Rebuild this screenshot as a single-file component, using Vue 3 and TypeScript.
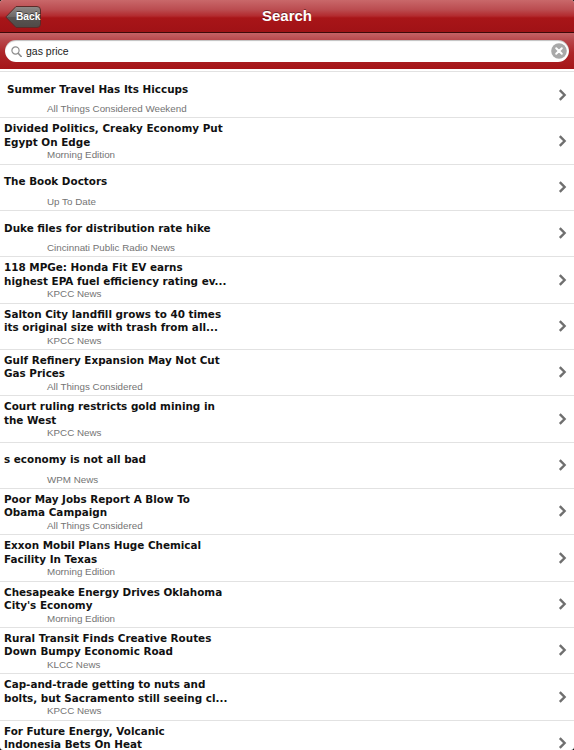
<script setup lang="ts">
interface Story { title: string; source: string; indent?: boolean }
const stories: Story[] = [
  { title: 'Summer Travel Has Its Hiccups', source: 'All Things Considered Weekend', indent: true },
  { title: 'Divided Politics, Creaky Economy Put\nEgypt On Edge', source: 'Morning Edition' },
  { title: 'The Book Doctors', source: 'Up To Date' },
  { title: 'Duke files for distribution rate hike', source: 'Cincinnati Public Radio News' },
  { title: '118 MPGe: Honda Fit EV earns\nhighest EPA fuel efficiency rating ev...', source: 'KPCC News' },
  { title: 'Salton City landfill grows to 40 times\nits original size with trash from all...', source: 'KPCC News' },
  { title: 'Gulf Refinery Expansion May Not Cut\nGas Prices', source: 'All Things Considered' },
  { title: 'Court ruling restricts gold mining in\nthe West', source: 'KPCC News' },
  { title: 's economy is not all bad', source: 'WPM News' },
  { title: 'Poor May Jobs Report A Blow To\nObama Campaign', source: 'All Things Considered' },
  { title: 'Exxon Mobil Plans Huge Chemical\nFacility In Texas', source: 'Morning Edition' },
  { title: "Chesapeake Energy Drives Oklahoma\nCity's Economy", source: 'Morning Edition' },
  { title: 'Rural Transit Finds Creative Routes\nDown Bumpy Economic Road', source: 'KLCC News' },
  { title: 'Cap-and-trade getting to nuts and\nbolts, but Sacramento still seeing cl...', source: 'KPCC News' },
  { title: 'For Future Energy, Volcanic\nIndonesia Bets On Heat', source: 'All Things Considered' },
]
</script>

<template>
  <div class="frame">
    <div class="screen">
      <header class="navbar">
        <button class="back">
          <svg class="back-shape" width="36" height="22" viewBox="0 0 36 22">
            <defs>
              <linearGradient id="backFill" x1="0" y1="0" x2="0" y2="1">
                <stop offset="0" stop-color="#8f8a88" />
                <stop offset="0.5" stop-color="#6d6765" />
                <stop offset="0.5" stop-color="#5a5452" />
                <stop offset="1" stop-color="#4e4947" />
              </linearGradient>
            </defs>
            <path d="M11 .5H32a3.500 3.500 0 0 1 3.500 3.500V18a3.500 3.500 0 0 1-3.500 3.500H11L.8 11Z" fill="url(#backFill)" stroke="#5c2a28" />
          </svg>
          <span class="back-label">Back</span>
        </button>
        <h1 class="title">Search</h1>
      </header>
      <div class="searchbar">
        <div class="field">
          <svg class="glass" width="11" height="11" viewBox="0 0 11 11" fill="none" stroke="#8d8d8d">
            <circle cx="4.500" cy="4.500" r="3.600" stroke-width="1.200" />
            <path d="M7.200 7.300l3 3.200" stroke-width="1.600" stroke-linecap="round" />
          </svg>
          <span class="query">gas price</span>
          <svg class="clear" width="16" height="16" viewBox="0 0 16 16">
            <circle cx="8" cy="8" r="7.800" fill="#a9a9a9" />
            <path d="M5.200 5.200l5.600 5.600M10.800 5.200l-5.600 5.600" stroke="#fff" stroke-width="2" stroke-linecap="round" />
          </svg>
        </div>
      </div>
      <ul class="list">
        <li v-for="story in stories" :key="story.title" class="row">
          <div class="text">
            <div class="head">
              <div class="headline" :class="{ indent: story.indent }">{{ story.title }}</div>
            </div>
            <div class="source">{{ story.source }}</div>
          </div>
          <svg class="chev" width="9" height="12" viewBox="0 0 9 12" fill="none">
            <path d="M1.800 1.200L6.600 6L1.800 10.800" stroke="#6f6f6f" stroke-width="2.400" />
          </svg>
        </li>
      </ul>
    </div>
  </div>
</template>

<style>
html, body { margin: 0; background: #000; overflow: hidden; }
</style>

<style scoped>
.frame {
  width: 574px;
  height: 750px;
  background: #000;
}
.screen {
  width: 574px;
  height: 750px;
  overflow: hidden;
  background: #fff;
  border-radius: 3px;
  font-family: "Liberation Sans", Arial, sans-serif;
}
.navbar {
  position: relative;
  height: 32px;
  display: flex;
  align-items: center;
  justify-content: center;
  background: linear-gradient(#c9686a 0, #bb4c50 30%, #b32a2e 50%, #a81518 56%, #a01216 100%);
  border-bottom: 1px solid #3d0a0a;
}
.back {
  position: absolute;
  left: 5px;
  top: 6px;
  width: 36px;
  height: 22px;
  padding: 0;
  border: 0;
  background: none;
  font-family: inherit;
}
.back-shape { position: absolute; left: 0; top: 0; }
.back-label {
  position: relative;
  display: block;
  padding-left: 11px;
  text-align: left;
  font-size: 10.200px;
  line-height: 22px;
  font-weight: 700;
  color: #fff;
  text-shadow: 0 -1px 0 rgba(0, 0, 0, .5);
}
.title {
  margin: -2px 0 0;
  font-size: 15px;
  font-weight: 700;
  color: #fff;
  text-shadow: 0 -1px 0 rgba(0, 0, 0, .4);
}
.searchbar {
  height: 36px;
  box-sizing: border-box;
  padding: 7px 5px 6px;
  background: linear-gradient(#c46266 0, #b8474b 20%, #ad2528 55%, #a51518 100%);
}
.field {
  height: 22px;
  display: flex;
  align-items: center;
  padding: 0 1px 0 6px;
  background: #fff;
  border-radius: 11px;
  box-shadow: inset 0 1px 1px rgba(0, 0, 0, .25);
}
.glass { flex: none; }
.query {
  flex: 1;
  margin-left: 4px;
  font-size: 10.500px;
  color: #222;
}
.clear { flex: none; margin-right: 1px; }
.list {
  list-style: none;
  margin: 2px 0 0;
  padding: 0;
  border-top: 1px solid #e2e2e2;
}
.row {
  height: 46.330px;
  box-sizing: border-box;
  display: flex;
  align-items: flex-start;
  justify-content: space-between;
  padding: 4px 7px 0 4px;
  border-bottom: 1px solid #e2e2e2;
}
.text { width: 226px; }
.head {
  height: 27px;
  display: flex;
  flex-direction: column;
  justify-content: center;
}
.headline {
  white-space: pre-line;
  font-family: "DejaVu Sans", Verdana, sans-serif;
  font-size: 10.400px;
  line-height: 13.500px;
  font-weight: 700;
  color: #111;
}
.headline.indent { padding-left: 3px; }
.source {
  padding-left: 43px;
  font-size: 9.800px;
  line-height: 11px;
  white-space: nowrap;
  color: #747474;
}
.chev { flex: none; margin-top: 12.500px; }
</style>
